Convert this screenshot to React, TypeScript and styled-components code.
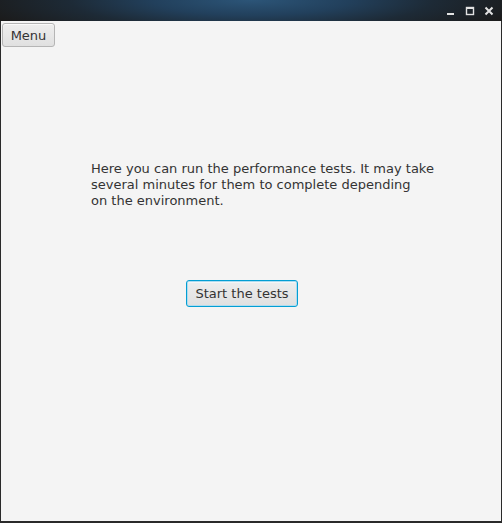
import React from "react";
import styled, { createGlobalStyle } from "styled-components";

const GlobalStyle = createGlobalStyle`
  html, body {
    margin: 0;
    padding: 0;
    background: #2b2b2b;
  }
`;

const Frame = styled.div`
  width: 502px;
  height: 523px;
  display: flex;
  flex-direction: column;
  background: #2a2a2a;
  overflow: hidden;
`;

const TitleBar = styled.div`
  height: 21px;
  flex: 0 0 21px;
  display: flex;
  justify-content: flex-end;
  align-items: center;
  gap: 9px;
  padding-right: 8px;
  background: radial-gradient(
    ellipse 280px 44px at 50% 0%,
    #2c5578 0%,
    #22405c 35%,
    #1d2a36 65%,
    #1b1b1b 100%
  );
`;

const WinButton = styled.svg`
  width: 10px;
  height: 10px;
  display: block;
`;

const Content = styled.div`
  flex: 1;
  margin: 0 1px 2px 1px;
  background: #f4f4f4;
  display: flex;
  flex-direction: column;
  font-family: "DejaVu Sans", Verdana, sans-serif;
  font-size: 13px;
  color: #333333;
`;

const baseButton = `
  font-family: "DejaVu Sans", Verdana, sans-serif;
  font-size: 13px;
  color: #333333;
  background: linear-gradient(#eeeeee, #e0e0e0);
  border: 1px solid #b5b5b5;
  border-radius: 3px;
  cursor: pointer;
  padding: 0;
  box-sizing: border-box;
`;

const MenuButton = styled.button`
  ${baseButton}
  align-self: flex-start;
  margin: 2px 0 0 1px;
  width: 53px;
  height: 24px;
  box-shadow: inset 0 1px 0 #fafafa;
`;

const Description = styled.p`
  margin: 114px 0 0 90px;
  line-height: 16px;
`;

const StartButton = styled.button`
  ${baseButton}
  align-self: flex-start;
  margin: 71px 0 0 185px;
  width: 112px;
  height: 27px;
  border: 1px solid #039ed3;
  box-shadow: inset 0 0 0 1px #aedcf0, inset 0 2px 0 #f6f6f6;
`;

export default function App() {
  return (
    <>
      <GlobalStyle />
      <Frame>
        <TitleBar>
          <WinButton viewBox="0 0 10 10">
            <rect x="1" y="7" width="7" height="2" fill="#e2e2e2" />
          </WinButton>
          <WinButton viewBox="0 0 10 10">
            <rect x="1.5" y="1.5" width="7" height="7" fill="none" stroke="#e2e2e2" strokeWidth="1.4" />
            <rect x="1" y="1" width="8" height="2" fill="#e2e2e2" />
          </WinButton>
          <WinButton viewBox="0 0 10 10">
            <path d="M1.5 1.5 L8.5 8.5 M8.5 1.5 L1.5 8.5" stroke="#e2e2e2" strokeWidth="2" />
          </WinButton>
        </TitleBar>
        <Content>
          <MenuButton>Menu</MenuButton>
          <Description>
            Here you can run the performance tests. It may take
            <br />
            several minutes for them to complete depending
            <br />
            on the environment.
          </Description>
          <StartButton>Start the tests</StartButton>
        </Content>
      </Frame>
    </>
  );
}
